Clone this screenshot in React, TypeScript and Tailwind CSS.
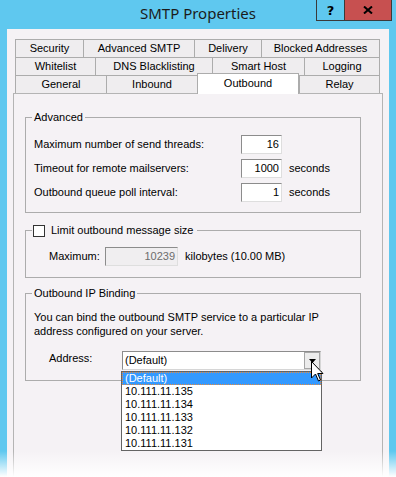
import { ReactNode } from 'react';

type Tab = { label: string; w: string; active?: boolean };

const rows: Tab[][] = [
  [
    { label: 'Security', w: 'w-[68px]' },
    { label: 'Advanced SMTP', w: 'w-[111px]' },
    { label: 'Delivery', w: 'w-[67px]' },
    { label: 'Blocked Addresses', w: 'w-[119px]' },
  ],
  [
    { label: 'Whitelist', w: 'w-[80px]' },
    { label: 'DNS Blacklisting', w: 'w-[117px]' },
    { label: 'Smart Host', w: 'w-[92px]' },
    { label: 'Logging', w: 'w-[76px]' },
  ],
  [
    { label: 'General', w: 'w-[91px]' },
    { label: 'Inbound', w: 'w-[91px]' },
    { label: 'Outbound', w: 'w-[102px]', active: true },
    { label: 'Relay', w: 'w-[81px]' },
  ],
];

const addresses = ['10.111.11.135', '10.111.11.134', '10.111.11.133', '10.111.11.132', '10.111.11.131'];

function NumBox({ value, w, disabled }: { value: string; w: string; disabled?: boolean }) {
  return (
    <div
      className={`${w} h-[19px] flex items-center justify-end pr-[2px] border-t border-l border-[#8c8c8c] border-r-[#dedede] border-b-[#dedede] border-r border-b ${
        disabled ? 'bg-[#f0eef0] text-[#6d6d6d]' : 'bg-white'
      }`}
    >
      {value}
    </div>
  );
}

// group box: padding lives on the inner div so the legend stays near the corner
function Group({ legend, children, className }: { legend: ReactNode; children: ReactNode; className?: string }) {
  return (
    <fieldset className={`w-[336px] border border-[#acacac] ${className ?? ''}`}>
      <legend className="ml-[6px] px-[2px] leading-[13px]">{legend}</legend>
      {children}
    </fieldset>
  );
}

export default function App() {
  return (
    <div className="w-[396px] h-[477px] bg-[#5fc8ef] flex flex-col relative overflow-hidden font-['Liberation_Sans',Arial,sans-serif] text-[11px] leading-[13px] text-black">
      {/* Title bar */}
      <div className="grid grid-cols-[1fr_auto_1fr] h-[29px] shrink-0">
        <div />
        <div className="pt-[3px] font-['Noto_Sans',sans-serif] text-[15px] leading-[20px] text-[#1b1b1b]">
          SMTP Properties
        </div>
        <div className="flex justify-end items-start pr-[4px]">
          <div className="w-[28px] h-[21px] border-l border-b border-[#3a3a3a] flex items-center justify-center font-['DejaVu_Sans',sans-serif] font-bold text-[13px]">
            ?
          </div>
          <div className="w-[48px] h-[21px] bg-[#c75050] border-l border-r border-b border-[#3a3a3a] flex items-center justify-center">
            <svg width="10" height="8" viewBox="0 0 10 8">
              <path d="M1 0.5 L9 7.5 M9 0.5 L1 7.5" stroke="#000" strokeWidth="2" />
            </svg>
          </div>
        </div>
      </div>

      {/* Client area */}
      <div className="mx-[7px] flex-1 bg-[#f5f2f5] pt-[10px] px-[6px] flex flex-col">
        {/* Tabs */}
        <div className="ml-[2px] w-[365px] flex flex-col">
          {rows.map((row, i) => (
            <div key={i} className="flex h-[18px] items-start">
              {row.map((t, j) =>
                t.active ? (
                  <div
                    key={j}
                    className={`${t.w} -mt-[2px] h-[21px] relative z-10 bg-white border-l border-t border-r border-[#acacac] flex items-start justify-center pt-[3px]`}
                  >
                    {t.label}
                  </div>
                ) : (
                  <div
                    key={j}
                    className={`${t.w} h-[18px] bg-[#efedef] border-t border-l border-[#acacac] ${
                      j === row.length - 1 ? 'border-r' : ''
                    } flex items-center justify-center`}
                  >
                    {t.label}
                  </div>
                )
              )}
            </div>
          ))}
        </div>

        {/* Panel */}
        <div className="flex-1 bg-[#f5f2f5] border-l border-t border-r border-[#b4b4b4] pt-[17px] pl-[11px]">
          <Group legend="Advanced">
            <div className="pl-[8px] pt-[11px] pb-[10px] flex flex-col gap-[5px]">
              <div className="flex items-center">
                <div className="w-[207px]">Maximum number of send threads:</div>
                <NumBox value="16" w="w-[41px]" />
              </div>
              <div className="flex items-center">
                <div className="w-[207px]">Timeout for remote mailservers:</div>
                <NumBox value="1000" w="w-[41px]" />
                <div className="ml-[7px]">seconds</div>
              </div>
              <div className="flex items-center">
                <div className="w-[207px]">Outbound queue poll interval:</div>
                <NumBox value="1" w="w-[41px]" />
                <div className="ml-[7px]">seconds</div>
              </div>
            </div>
          </Group>

          <fieldset className="mt-[11px] w-[336px] border border-[#acacac]">
            <legend className="ml-[6px] pl-[1px] pr-[4px] leading-[13px]">
              <div className="flex items-center">
                <div className="w-[12px] h-[12px] border border-[#333] bg-white" />
                <span className="ml-[6px]">Limit outbound message size</span>
              </div>
            </legend>
            <div className="pl-[23px] pt-[10px] pb-[11px] flex items-center">
              <div className="w-[56px]">Maximum:</div>
              <NumBox value="10239" w="w-[73px]" disabled />
              <div className="ml-[7px]">kilobytes (10.00 MB)</div>
            </div>
          </fieldset>

          <Group legend="Outbound IP Binding" className="mt-[9px]">
            <div className="pt-[10px] pb-[10px]">
              <div className="pl-[8px] leading-[14px]">
                You can bind the outbound SMTP service to a particular IP
                <br />
                address configured on your server.
              </div>
              <div className="mt-[13px] pl-[23px] flex items-center">
                <div className="w-[73px] self-start pt-[1px]">Address:</div>
                <div className="relative w-[199px] h-[19px] bg-white border-t border-l border-[#8c8c8c] border-r border-b border-r-[#d6d6d6] border-b-[#d6d6d6] flex items-center">
                  <span className="pl-[2px] flex-1">(Default)</span>
                  <div className="w-[16px] h-[17px] bg-[#ececec] border border-[#a6a6a6] flex items-center justify-center">
                    <svg width="7" height="4" viewBox="0 0 7 4">
                      <path d="M0 0 H7 L3.5 4 Z" fill="#000" />
                    </svg>
                  </div>
                  {/* Open list */}
                  <div className="absolute left-[-2px] top-[19px] w-[201px] bg-white border border-[#646464] z-20">
                    <div className="h-[13px] leading-[11px] bg-[#3399ff] text-white border border-dotted border-[#e88a3c] pl-[2px]">
                      (Default)
                    </div>
                    {addresses.map((a) => (
                      <div key={a} className="h-[13px] leading-[13px] pl-[3px]">
                        {a}
                      </div>
                    ))}
                  </div>
                  {/* Mouse pointer */}
                  <svg
                    className="absolute left-[188px] top-[9px] z-30"
                    width="13"
                    height="21"
                    viewBox="0 0 13 21"
                  >
                    <path
                      d="M0.5 0.5 V17 L4.5 13 L7.5 20 L9.5 19 L6.7 12.5 H12 Z"
                      fill="#fff"
                      stroke="#000"
                      strokeWidth="1"
                    />
                  </svg>
                </div>
              </div>
            </div>
          </Group>
        </div>
      </div>

      {/* Fade at the bottom edge */}
      <div className="absolute inset-x-0 bottom-0 h-[26px] bg-linear-to-b from-white/0 to-white pointer-events-none" />
    </div>
  );
}
